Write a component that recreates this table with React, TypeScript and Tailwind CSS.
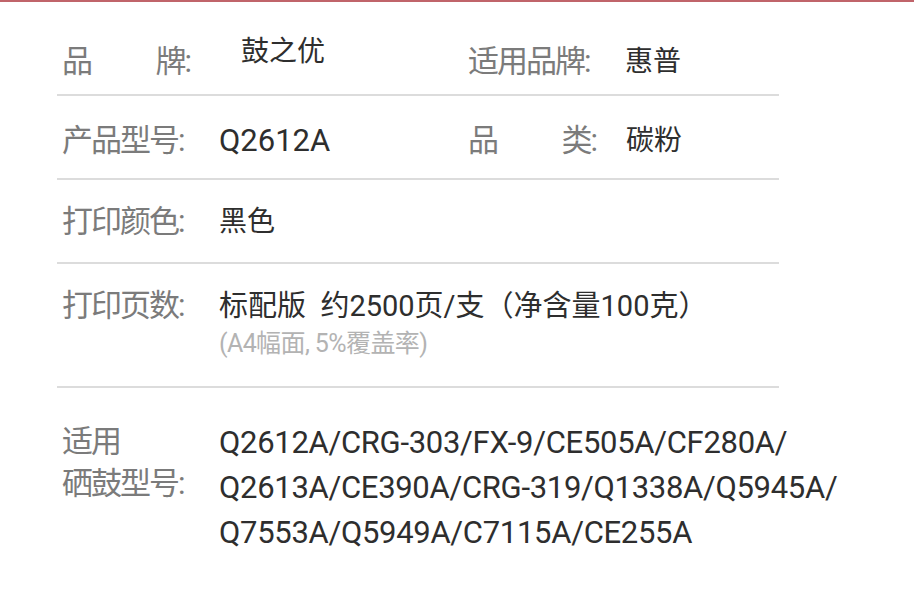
const labelCls = "text-[31px] leading-[40px] text-[#7b7b7b] tracking-[-2px]";
const valueCls = "text-[28px] leading-[40px] text-[#2e2e2e]";
const latinCls = "text-[31px] leading-[40px] text-[#2e2e2e]";

const Label = ({ text }: { text: string }) => (
  <div className={`w-[162px] shrink-0 pl-[5px] ${labelCls}`}>{text}</div>
);

// two-character labels are spread over the width of four
const SpreadLabel = ({ a, b }: { a: string; b: string }) => (
  <div className="w-[163px] shrink-0 pl-[5px]">
    <div className={`flex w-[128px] justify-between ${labelCls}`}>
      <span>{a}</span>
      <span>{b}</span>
    </div>
  </div>
);

const models = [
  "Q2612A/CRG-303/FX-9/CE505A/CF280A/",
  "Q2613A/CE390A/CRG-319/Q1338A/Q5945A/",
  "Q7553A/Q5949A/C7115A/CE255A",
];

export default function App() {
  return (
    <div className="w-[914px] h-[590px] bg-white overflow-hidden font-[Roboto,'Noto_Sans_CJK_SC',sans-serif]">
      <div className="h-[2px] bg-[#c0646a]" />

      <div className="ml-[57px] w-[722px]">
        {/* brand */}
        <div className="h-[94px] border-b-2 border-[#dcdcdc] pt-[40px] flex">
          <div className="w-[406px] flex">
            <SpreadLabel a="品" b="牌:" />
            <div className={`${valueCls} ml-[21px] -mt-[10px] text-[#1f1f1f]`}>鼓之优</div>
          </div>
          <div className="flex">
            <Label text="适用品牌:" />
            <div className={valueCls}>惠普</div>
          </div>
        </div>

        {/* model */}
        <div className="h-[84px] border-b-2 border-[#dcdcdc] pt-[25px] flex">
          <div className="w-[406px] flex">
            <Label text="产品型号:" />
            <div className={latinCls}>Q2612A</div>
          </div>
          <div className="flex">
            <SpreadLabel a="品" b="类:" />
            <div className={valueCls}>碳粉</div>
          </div>
        </div>

        {/* colour */}
        <div className="h-[84px] border-b-2 border-[#dcdcdc] pt-[22px] flex">
          <Label text="打印颜色:" />
          <div className={valueCls}>黑色</div>
        </div>

        {/* page yield */}
        <div className="h-[124px] border-b-2 border-[#dcdcdc] pt-[22px] flex">
          <Label text="打印页数:" />
          <div>
            <div className={`${valueCls} text-[29px] whitespace-pre`}>标配版  约2500页/支（净含量100克）</div>
            <div className="text-[25px] leading-[36px] text-[#b3b3b3] tracking-[-0.6px]">(A4幅面, 5%覆盖率)</div>
          </div>
        </div>

        {/* compatible cartridges */}
        <div className="pt-[33px] flex">
          <div className={`w-[162px] shrink-0 pl-[5px] ${labelCls} leading-[42px]`}>
            <div>适用</div>
            <div>硒鼓型号:</div>
          </div>
          <div className={`${latinCls} leading-[45px] tracking-[-0.3px] -mt-[1px] whitespace-nowrap`}>
            {models.map((m) => (
              <div key={m}>{m}</div>
            ))}
          </div>
        </div>
      </div>
    </div>
  );
}
